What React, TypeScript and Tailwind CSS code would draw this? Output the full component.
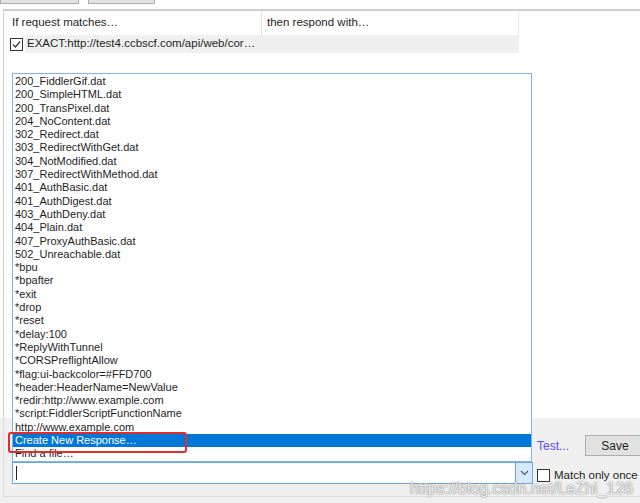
import React from 'react'

const items = [
  '200_FiddlerGif.dat',
  '200_SimpleHTML.dat',
  '200_TransPixel.dat',
  '204_NoContent.dat',
  '302_Redirect.dat',
  '303_RedirectWithGet.dat',
  '304_NotModified.dat',
  '307_RedirectWithMethod.dat',
  '401_AuthBasic.dat',
  '401_AuthDigest.dat',
  '403_AuthDeny.dat',
  '404_Plain.dat',
  '407_ProxyAuthBasic.dat',
  '502_Unreachable.dat',
  '*bpu',
  '*bpafter',
  '*exit',
  '*drop',
  '*reset',
  '*delay:100',
  '*ReplyWithTunnel',
  '*CORSPreflightAllow',
  '*flag:ui-backcolor=#FFD700',
  '*header:HeaderName=NewValue',
  '*redir:http://www.example.com',
  '*script:FiddlerScriptFunctionName',
  'http://www.example.com',
  'Create New Response…',
  'Find a file…',
]

function CheckMark() {
  return (
    <svg width="9" height="9" viewBox="0 0 9 9" fill="none">
      <path d="M1 4.5 L3.5 7 L8 1.5" stroke="#333" strokeWidth="1.2" />
    </svg>
  )
}

export default function App() {
  return (
    <div className="w-[640px] h-[503px] relative overflow-hidden bg-white font-['Liberation_Sans',Arial,sans-serif] text-[11px] text-[#1e1e1e]">
      {/* buttons cut off at the top */}
      <div className="h-[9px] flex gap-[9px] items-start">
        <div className="w-[79px] h-[4px] border border-t-0 border-[#adadad] bg-[#e1e1e1]" />
        <div className="w-[67px] h-[4px] border border-t-0 border-[#adadad] bg-[#e1e1e1]" />
      </div>

      {/* rules list */}
      <div className="ml-[3px] h-[409px] border-t-2 border-l border-[#cfcfcf] pl-[6px]">
        <div className="w-[509px]">
          <div className="h-[24px] flex border-r border-[#ececec] text-[11.5px]">
            <div className="w-[252px] flex items-center pl-[2px] border-r border-[#e5e5e5]">If request matches…</div>
            <div className="flex items-center pl-[5px]">then respond with…</div>
          </div>
          <div className="h-[18px] flex items-center text-[11.5px]">
            <div className="w-[13px] h-[13px] border border-[#333] bg-white flex items-center justify-center">
              <CheckMark />
            </div>
            <div className="flex-1 h-full ml-[2px] pl-[2px] bg-[#f0f0f0] flex items-center">
              EXACT:http://test4.ccbscf.com/api/web/cor…
            </div>
          </div>
        </div>
      </div>

      {/* bottom editor */}
      <div className="h-[85px] bg-[#f0f0f0]">
        <div className="ml-[3px] h-[79px] border-l border-b border-[#dcdcdc] flex pl-[8px]">
          <div className="w-[521px] shrink-0 pt-[44px]">
            <div className="h-[22px] border border-[#6aa7e3] bg-white flex">
              <div className="flex-1 flex items-center pl-[3px]">
                <div className="w-px h-[14px] bg-[#222]" />
              </div>
              <div className="w-[17px] h-full bg-[#d6e9f9] border-l border-[#6aa7e3] flex items-center justify-center">
                <svg width="9" height="6" viewBox="0 0 9 6" fill="none">
                  <path d="M1 1 L4.5 4.5 L8 1" stroke="#555" strokeWidth="1.1" />
                </svg>
              </div>
            </div>
          </div>
          <div className="ml-[4px] shrink-0 pt-[17px]">
            <div className="flex items-center h-[21px]">
              <span className="text-[12px] text-[#5b4cf0] w-[48px]">Test...</span>
              <div className="w-[60px] h-[21px] border border-[#adadad] bg-[#e1e1e1] flex items-center justify-center text-[12px]">
                Save
              </div>
            </div>
            <div className="mt-[11px] flex items-center gap-[4px]">
              <div className="w-[13px] h-[13px] border border-[#333] bg-white" />
              <span className="text-[11.5px] whitespace-nowrap">Match only once</span>
            </div>
          </div>
        </div>
      </div>

      {/* dropdown popup */}
      <div className="absolute left-[12px] top-[73px] w-[520px] h-[389px] border border-[#7eb4ea] bg-white py-px">
        {items.map((it, i) => (
          <div
            key={it}
            className={
              i === 27
                ? 'h-[13.3px] leading-[13.3px] pl-[2px] bg-[#0078d7] text-white whitespace-nowrap'
                : 'h-[13.3px] leading-[13.3px] pl-[2px] whitespace-nowrap'
            }
          >
            {it}
          </div>
        ))}
      </div>

      {/* red highlight box */}
      <div className="absolute left-[8px] top-[432px] w-[179px] h-[21px] border-2 border-[#e32b2b] rounded-[3px]" />

      {/* watermark */}
      <div className="absolute left-[410px] top-[477px] text-[16px] text-white/85 font-['Liberation_Sans',Arial,sans-serif] [text-shadow:0_0_1px_#777,0_0_2px_#999]">
        https://blog.csdn.net/LeZhi_126
      </div>
    </div>
  )
}
